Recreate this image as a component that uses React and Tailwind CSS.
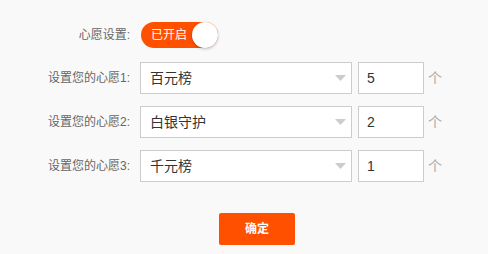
import React, { useState } from 'react';

const wishes = [
  { label: '设置您的心愿1:', name: '百元榜', count: '5' },
  { label: '设置您的心愿2:', name: '白银守护', count: '2' },
  { label: '设置您的心愿3:', name: '千元榜', count: '1' },
];

const font = { fontFamily: '"Liberation Sans", "Noto Sans CJK SC", sans-serif' };

const App = () => {
  const [enabled, setEnabled] = useState(true);

  return (
    <div className="w-[488px] h-[254px] bg-[#f9f9f9] pt-[22px]" style={font}>
      {/* Switch row */}
      <div className="flex items-center h-[26px]">
        <div className="w-[130px] text-right text-[12px] text-[#666]">心愿设置:</div>
        <button
          onClick={() => setEnabled(!enabled)}
          className="ml-[11px] flex items-center w-[77px] h-[26px] rounded-full bg-[#ff5000]"
        >
          <span className="flex-1 text-[12px] text-white text-center pl-[5px] leading-none">已开启</span>
          <span className="w-[26px] h-[26px] rounded-full bg-white shadow-[0_1px_3px_rgba(0,0,0,0.25)]" />
        </button>
      </div>

      {/* Wish rows */}
      <div className="mt-[14px] flex flex-col gap-[12px]">
        {wishes.map((w) => (
          <div key={w.label} className="flex items-center h-[32px]">
            <div className="w-[130px] text-right text-[12px] text-[#666]">{w.label}</div>
            <div className="ml-[10px] w-[212px] h-[32px] border border-[#ccc] bg-white flex items-center justify-between pl-[9px] pr-[5px]">
              <span className="text-[14px] text-[#333]">{w.name}</span>
              <svg width="11" height="6" viewBox="0 0 11 6">
                <path d="M0 0h11L5.5 6z" fill="#ccc" />
              </svg>
            </div>
            <div className="ml-[6px] w-[66px] h-[32px] border border-[#ccc] bg-white flex items-center pl-[8px] text-[14px] text-[#333]">
              {w.count}
            </div>
            <span className="ml-[4px] text-[14px] text-[#aaa]">个</span>
          </div>
        ))}
      </div>

      <div className="mt-[31px] ml-[219px]">
        <button className="w-[76px] h-[32px] rounded-[2px] bg-[#ff5000] text-white text-[12px] font-bold">
          确定
        </button>
      </div>
    </div>
  );
};

export default App;
